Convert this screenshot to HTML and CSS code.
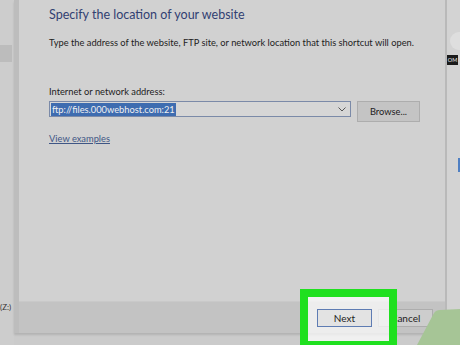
FILE: index.html
```html
<!DOCTYPE html>
<html lang="en">
<head>
  <meta charset="UTF-8">
  <title>Create Shortcut</title>
  <link rel="stylesheet" href="styles.css">
</head>
<body>
  <div class="desk">
    <!-- Left edge of the explorer window behind -->
    <div class="side-left">
      <div class="side-sel"></div>
      <div class="side-drive">(Z:)</div>
    </div>

    <!-- Wizard dialog -->
    <div class="dialog">
      <div class="content">
        <h1 class="title">Specify the location of your website</h1>
        <p class="intro">Type the address of the website, FTP site, or network location that this shortcut will open.</p>

        <label class="field-label" for="address">Internet or network address:</label>
        <div class="field-row">
          <div class="combo">
            <span class="combo-value">ftp://files.000webhost.com:21</span>
            <svg class="combo-arrow" width="8" height="5" viewBox="0 0 8 5"><path d="M0.5 0.5 L4 4 L7.5 0.5" fill="none" stroke="#555" stroke-width="1"/></svg>
          </div>
          <button class="btn browse">Browse...</button>
        </div>

        <a class="examples" href="#">View examples</a>
      </div>

      <div class="footer">
        <button class="btn next">Next</button>
        <button class="btn cancel">Cancel</button>
      </div>
    </div>

    <!-- Right edge: desktop behind -->
    <div class="side-right">
      <div class="blob"></div>
      <div class="badge">OM</div>
      <div class="chip"></div>
    </div>

    <!-- Annotations on top -->
    <div class="highlight"></div>
    <svg class="corner" width="50" height="40" viewBox="0 0 50 40">
      <path d="M7 40 L24 8 Q26 5 30 5 L50 4 L50 40 Z" fill="#a6c596"/>
    </svg>
  </div>
</body>
</html>
```

FILE: styles.css
```css
* {
  margin: 0;
  padding: 0;
  box-sizing: border-box;
}

body {
  width: 460px;
  height: 345px;
  overflow: hidden;
  background-color: #cbcbcb;
  font-family: Lato, "Open Sans", sans-serif;
  color: #1f1f1f;
}

.desk {
  position: relative;
  display: flex;
  height: 345px;
}

/* Left strip */
.side-left {
  flex: 0 0 14px;
  display: flex;
  flex-direction: column;
  background-color: #cdcdcd;
}

.side-sel {
  margin-top: 45px;
  width: 12px;
  height: 17px;
  background-color: #bcbcbc;
}

.side-drive {
  margin-top: auto;
  margin-bottom: 33px;
  font-size: 8px;
  color: #333;
  white-space: nowrap;
}

/* Dialog */
.dialog {
  flex: 0 0 433px;
  height: 333px;
  display: flex;
  flex-direction: column;
  background-color: #d1d1d1;
  border-left: 5px solid #bdbdbd;
  border-right: 2px solid #b9b9b9;
  box-shadow: 0 2px 2px rgba(0, 0, 0, 0.12);
}

.content {
  flex: 1;
  padding: 6px 0 0 30px;
}

.title {
  font-size: 12.5px;
  line-height: 18px;
  font-weight: 400;
  color: #323f72;
}

.intro {
  margin-top: 13px;
  font-size: 9.3px;
  line-height: 12px;
  color: #222;
}

.field-label {
  display: block;
  margin-top: 37px;
  font-size: 9.3px;
  line-height: 12px;
  color: #222;
}

.field-row {
  display: flex;
  align-items: flex-start;
  gap: 6px;
  margin-top: 3px;
}

.combo {
  width: 302px;
  height: 16px;
  display: flex;
  align-items: center;
  padding: 0 1px;
  background-color: #d6d6d6;
  border: 1px solid #7b8aa8;
}

.combo-value {
  font-size: 9.3px;
  line-height: 13px;
  padding: 0 1px;
  color: #f0f0f0;
  background-color: #3e6cb0;
}

.combo-arrow {
  margin-left: auto;
  margin-right: 3px;
}

.btn {
  font-family: inherit;
  font-size: 9.3px;
  color: #222;
  background-color: #c4c4c4;
  border: 1px solid #adadad;
  cursor: pointer;
}

.browse {
  width: 63px;
  height: 21px;
}

.examples {
  display: inline-block;
  margin-top: 11px;
  font-size: 9.3px;
  line-height: 12px;
  color: #3f5685;
  text-decoration: underline;
}

/* Footer with buttons */
.footer {
  height: 32px;
  display: flex;
  align-items: center;
  padding-left: 298px;
  gap: 6px;
  background-color: #c3c3c3;
  border-top: 1px solid #c9c9c9;
}

.next,
.cancel {
  width: 55px;
  height: 18px;
  font-size: 10px;
}

.next {
  position: relative;
  z-index: 2;
  background-color: #e3e3e3;
  border-color: #5e7cb3;
}

.cancel {
  background-color: #cdcdcd;
}

/* Right strip */
.side-right {
  flex: 1;
  min-width: 0;
  display: flex;
  flex-direction: column;
  background-color: #d3d3d3;
}

.blob {
  margin-top: 32px;
  margin-left: 3px;
  width: 18px;
  height: 18px;
  border-radius: 50%;
  background-color: #dedede;
}

.badge {
  margin-top: 5px;
  width: 11px;
  height: 10px;
  background-color: #1a1a1a;
  color: #eee;
  font-size: 5.5px;
  line-height: 10px;
  text-align: center;
}

.chip {
  margin-top: 93px;
  margin-left: 11px;
  width: 4px;
  height: 14px;
  background-color: #4f7fc2;
}

/* Green annotation box over the Next button */
.highlight {
  position: absolute;
  left: 300px;
  top: 289px;
  width: 97px;
  height: 60px;
  z-index: 1;
  border: 8px solid #1fe01f;
  background-color: rgba(255, 255, 255, 0.7);
}

.corner {
  position: absolute;
  left: 410px;
  top: 305px;
  z-index: 3;
}
```
